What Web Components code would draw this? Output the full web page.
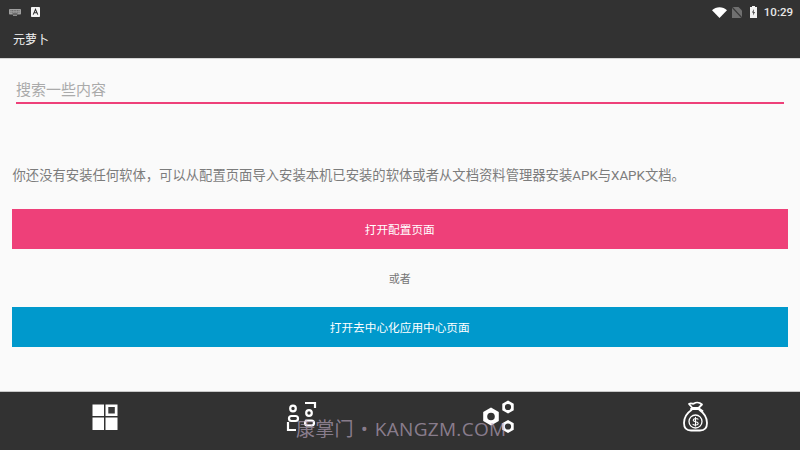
<!DOCTYPE html>
<html lang="zh"><head><meta charset="utf-8">
<style>
html,body{margin:0;padding:0;width:800px;height:450px;overflow:hidden;background:#fafafa}
body{font-family:Roboto,"Noto Sans CJK SC",sans-serif}
</style></head><body>
<app-shell>
  <status-bar slot="top"></status-bar>
  <app-bar slot="top">元萝卜</app-bar>
  <search-field placeholder="搜索一些内容"></search-field>
  <p-text>你还没有安装任何软体，可以从配置页面导入安装本机已安装的软体或者从文档资料管理器安装APK与XAPK文档。</p-text>
  <action-button color="#ee4079">打开配置页面</action-button>
  <or-text>或者</or-text>
  <action-button color="#0099cc">打开去中心化应用中心页面</action-button>
  <bottom-nav slot="bottom"></bottom-nav>
  <water-mark slot="bottom">康掌门 • KANGZM.COM</water-mark>
</app-shell>
<script>
function def(name, css, html, init){
  customElements.define(name, class extends HTMLElement{
    constructor(){super();const r=this.attachShadow({mode:'open'});r.innerHTML='<style>'+css+'</style>'+html;if(init)init(this,r);}
  });
}
const CJK='Roboto,"Noto Sans CJK SC",sans-serif';
function hex(cx,cy,R,r){
  const w=R*0.866,h=R/2;
  return `M${cx} ${cy-R}L${cx+w} ${cy-h}V${cy+h}L${cx} ${cy+R}L${cx-w} ${cy+h}V${cy-h}Z M${cx-r} ${cy}a${r} ${r} 0 1 0 ${2*r} 0a${r} ${r} 0 1 0 ${-2*r} 0Z`;
}
def('app-shell',`:host{display:flex;flex-direction:column;width:800px;height:450px;position:relative;font-family:${CJK}}
main{flex:1;display:flex;flex-direction:column;padding:0 12.5px 0 12px;min-height:0;background:#fafafa}`,
`<slot name="top"></slot><main><slot></slot></main><slot name="bottom"></slot>`);
def('status-bar',`:host{display:flex;align-items:center;height:24px;background:#323232;padding:0 7px 0 9px;color:#fff}
.l{display:flex;gap:10px;align-items:center;flex:1}
.r{display:flex;align-items:center}
.t{font:500 11.5px Roboto,sans-serif;color:#e8e8e8;margin-left:7px}
svg{display:block}`,
`<div class="l">
<svg width="12" height="7" viewBox="0 0 12 7"><rect x="0" y="0" width="12" height="5.500" rx=".8" fill="#a0a0a0"/><path d="M1.500 1.500h9M1.500 3.200h9" stroke="#555" stroke-width=".7" stroke-dasharray="1 .6"/><rect x="3.500" y="4.300" width="5" height=".8" fill="#555"/><rect x="4" y="6" width="4" height="1" fill="#8a8a8a"/></svg>
<svg width="9" height="10" viewBox="0 0 9 10"><rect width="9" height="10" rx=".8" fill="#f5f5f5"/><path d="M2.200 7.600 4.500 2.400l2.300 5.200M3.100 5.800h2.800" fill="none" stroke="#333" stroke-width="1.100"/></svg>
</div><div class="r">
<svg width="15" height="11" viewBox="0 0 15 11" style="margin-right:5px"><path d="M0 3.200C4-.9 11-.9 15 3.200L7.500 11z" fill="#fff"/></svg>
<svg width="10" height="11" viewBox="0 0 10 11" style="margin-right:8px"><path d="M0 0h6.500L10 3.500V11H0z" fill="#707070"/><path d="M0 0 10 11" stroke="#3a3a3a" stroke-width="1.200"/></svg>
<svg width="7" height="12" viewBox="0 0 7 12"><path d="M2 0h3v1h2v11H0V1h2z" fill="#f2f2f2"/><path d="M4 3 2 6.600h1.400L3 9.500l2-3.600H3.600z" fill="#333"/></svg>
<span class="t">10:29</span></div>`);
def('app-bar',`:host{display:flex;align-items:center;box-sizing:border-box;height:34.5px;background:#323232;color:#f2f2f2;font-size:12px;padding:0 13px 4px;border-bottom:1px solid #d4d4d4}`,`<slot></slot>`);
def('search-field',`:host{display:flex;align-items:flex-end;box-sizing:border-box;height:45.5px;margin:0 3.500px 0 4px;border-bottom:2px solid #ee4079;color:#aaa;font-size:15px;line-height:22px;padding-bottom:1px}`,
`<span id="p"></span>`,(h,r)=>{queueMicrotask(()=>{r.getElementById('p').textContent=h.getAttribute('placeholder')})});
def('p-text',`:host{display:block;margin:62px 0 23px .5px;color:#7c7c7c;font-size:13.33px;line-height:20px;white-space:nowrap}`,`<slot></slot>`);
def('action-button',`:host{display:flex;align-items:center;justify-content:center;box-sizing:border-box;height:40px;padding-bottom:2px;color:#fff;font-size:11.67px;background:var(--c)}`,`<slot></slot>`,(h)=>{queueMicrotask(()=>h.style.setProperty('--c',h.getAttribute('color')))});
def('or-text',`:host{display:flex;align-items:center;justify-content:center;height:58px;color:#757575;font-size:11px}`,`<slot></slot>`);
def('bottom-nav',`:host{display:grid;grid-template-columns:repeat(4,197px);padding:0 6.500px;box-sizing:border-box;height:59px;background:#323232;border-top:1px solid #c8c8c8;color:#fff}
div{display:flex;justify-content:center;padding-top:6px}svg{display:block}`,
`<div><svg width="40" height="40" viewBox="85 398 40 40" fill="#fff"><rect x="92.500" y="404.500" width="11.500" height="11.500"/><rect x="105.500" y="404.500" width="12" height="11.500"/><rect x="108.300" y="407" width="6.500" height="6.500" fill="#3a3a3a"/><rect x="92.500" y="417.500" width="11.500" height="12.500"/><rect x="105.500" y="417.500" width="12" height="12.500"/></svg></div>
<div><svg width="40" height="40" viewBox="282 398 40 40" fill="none" stroke="#fff" stroke-width="2.200"><circle cx="293" cy="408.500" r="2.800"/><rect x="289" y="416" width="9" height="5" rx="2.500"/><circle cx="309" cy="413" r="2.800"/><rect x="305" y="420.500" width="9" height="5" rx="2.500"/><path d="M305 403h10v5M288 422v8h8"/></svg></div>
<div><svg width="40" height="40" viewBox="479 398 40 40" fill="#fff" fill-rule="evenodd"><path d="${hex(491,416.5,9,3.800)}"/><path d="${hex(508,407,6.600,3.100)}"/><path d="${hex(508,426.500,6.600,3.100)}"/></svg></div>
<div><svg width="40" height="40" viewBox="676 398 40 40" fill="none" stroke="#fff" stroke-width="1.800" stroke-linejoin="round" stroke-linecap="round"><path d="M689 404c2.500-1.500 3.500.5 5-.5 1.500-1 5-1.500 8 1l-3.500 3.500h-6z" stroke-width="1.800"/><path d="M691 409h8M699 408.500l3.500 2.500"/><path d="M691.500 410C687 413 684 418 684 423c0 5 3 7.500 7 7.500h9c4 0 7-2.500 7-7.500 0-5-3-10-7.500-13"/><circle cx="695.500" cy="421.500" r="6.500" stroke-width="1.300"/><path d="M698 419.200c-1-.9-4.800-1-4.800 1 0 2.200 5 1 5 3.300 0 2-4 1.900-5.200.8M695.500 417.200v8.800" stroke-width="1.100"/></svg></div>`);
def('water-mark',`:host{position:absolute;left:296px;top:414px;font:19px "Open Sans","Noto Sans CJK SC",sans-serif;color:rgba(195,175,200,.62);white-space:nowrap;pointer-events:none;letter-spacing:.3px;word-spacing:1.500px}`,`<slot></slot>`);
</script>
</body></html>
